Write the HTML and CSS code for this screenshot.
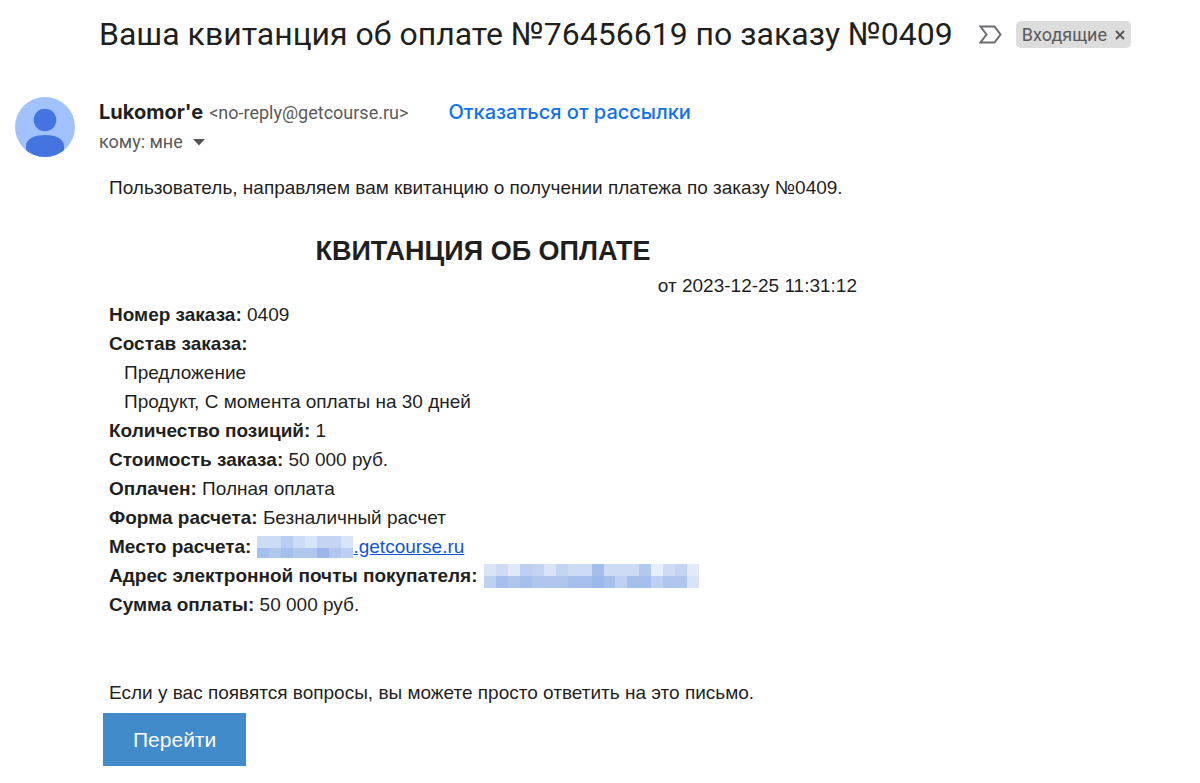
FILE: index.html
```
<!DOCTYPE html>
<html lang="ru">
<head>
<meta charset="utf-8">
<title>Ваша квитанция об оплате</title>
<link rel="stylesheet" href="styles.css">
</head>
<body>
<header class="subject">
  <h1 class="subject-title">Ваша квитанция об оплате №76456619 по заказу №0409</h1>
  <svg class="marker" width="24" height="20" viewBox="0 0 24 20" aria-hidden="true"><path d="M1.500 2.500H15.500L21.500 10.500L15.500 18.500H1.500L7.500 10.500Z" fill="none" stroke="#6b6d70" stroke-width="2"/></svg>
  <span class="label">Входящие
    <button class="label-close" type="button" aria-label="Удалить ярлык"><svg width="10" height="12" viewBox="0 0 10 12"><path d="M1 3L9 11M9 3L1 11" stroke="#555" stroke-width="1.800"/></svg></button>
  </span>
</header>
<main class="message">
  <svg class="avatar" width="60" height="60" viewBox="0 0 60 60" aria-hidden="true">
    <defs><clipPath id="round"><circle cx="30" cy="30" r="30"/></clipPath></defs>
    <circle cx="30" cy="30" r="30" fill="#a1c2fd"/>
    <g clip-path="url(#round)" fill="#4374e0"><circle cx="30" cy="23" r="11.300"/><path d="M11 60V49C11 41 21 38 30 38S49 41 49 49V60Z"/></g>
  </svg>
  <div class="content">
    <div class="sender">
      <span class="sender-name">Lukomor'e</span>
      <span class="sender-mail">&lt;no-reply@getcourse.ru&gt;</span>
      <a class="unsubscribe" href="#">Отказаться от рассылки</a>
    </div>
    <button class="recipient" type="button">кому: мне <svg width="12" height="7" viewBox="0 0 12 7" aria-hidden="true"><path d="M0 0H12L6 6.500Z" fill="#555"/></svg></button>
    <article class="letter">
      <p>Пользователь, направляем вам квитанцию о получении платежа по заказу №0409.</p>
      <h2 class="receipt-title">КВИТАНЦИЯ ОБ ОПЛАТЕ</h2>
      <p class="receipt-date">от 2023-12-25 11:31:12</p>
      <p><b>Номер заказа:</b> 0409</p>
      <p><b>Состав заказа:</b></p>
      <p class="item">Предложение</p>
      <p class="item">Продукт, С момента оплаты на 30 дней</p>
      <p><b>Количество позиций:</b> 1</p>
      <p><b>Стоимость заказа:</b> 50 000 руб.</p>
      <p><b>Оплачен:</b> Полная оплата</p>
      <p><b>Форма расчета:</b> Безналичный расчет</p>
      <p class="row"><b>Место расчета:</b>
        <span class="masked-link"><svg width="96" height="22" viewBox="0 0 96 22" aria-hidden="true" shape-rendering="crispEdges">
          <path fill="#cddcf5" d="M0 0h96v12H0z"/><path fill="#b8cef1" d="M24 0h12v12H24z"/><path fill="#c4d4f2" d="M60 0h24v12H60z"/><path fill="#d8e4f8" d="M48 0h12v12H48zM84 0h12v12H84z"/>
          <path fill="#b0c7ee" d="M0 12h96v10H0z"/><path fill="#a4beed" d="M0 12h12v10H0zM24 12h12v10H24z"/><path fill="#9bb7ea" d="M60 12h12v10H60z"/><path fill="#bbcff2" d="M84 12h12v10H84z"/>
        </svg><a class="site" href="#">.getcourse.ru</a></span></p>
      <p class="row"><b>Адрес электронной почты покупателя:</b>
        <svg width="215" height="24" viewBox="0 0 215 24" aria-hidden="true" shape-rendering="crispEdges">
          <path fill="#cddbf5" d="M0 0h215v12H0z"/><path fill="#d9e4f7" d="M0 0h12v12H0zM60 0h12v12H60z"/><path fill="#e0e8f9" d="M24 0h12v12H24z"/><path fill="#bdd0f1" d="M36 0h12v12H36z"/><path fill="#c3d4f2" d="M48 0h12v12H48zM72 0h12v12H72zM191 0h12v12H191z"/><path fill="#a6beeb" d="M108 0h12v12H108z"/><path fill="#b2c8ee" d="M155 0h12v12H155z"/><path fill="#e8eefb" d="M167 0h12v12H167z"/><path fill="#e2eaf8" d="M203 0h12v12H203z"/>
          <path fill="#b1c6ee" d="M0 12h215v12H0z"/><path fill="#bfd1f2" d="M0 12h12v12H0zM131 12h12v12H131zM167 12h12v12H167z"/><path fill="#a7bfec" d="M12 12h12v12H12zM36 12h12v12H36zM84 12h47v12H84zM143 12h24v12H143z"/><path fill="#9db8ea" d="M108 12h12v12H108z"/><path fill="#d8e3f6" d="M203 12h12v12H203z"/>
        </svg></p>
      <p><b>Сумма оплаты:</b> 50 000 руб.</p>
      <p class="outro">Если у вас появятся вопросы, вы можете просто ответить на это письмо.</p>
    </article>
    <a class="go" href="#">Перейти</a>
  </div>
</main>
</body>
</html>
```
FILE: styles.css
```
* { box-sizing: border-box; }
body { margin: 0; background: #fff; color: #1f1f1f; font-family: "Liberation Sans", Arial, sans-serif; font-size: 19px; line-height: 29px; }
h1, h2, p { margin: 0; }
button { border: 0; padding: 0; background: none; font: inherit; color: inherit; cursor: pointer; }
.subject { display: flex; align-items: center; padding: 12px 16px 0 99px; font-family: Roboto, sans-serif; }
.subject-title { font-family: Roboto, sans-serif; font-size: 32px; line-height: 44px; font-weight: 400; white-space: nowrap; }
.marker { flex: none; margin-left: 26px; }
.label { display: flex; align-items: center; gap: 8px; margin-left: 13px; padding: 0 6px; height: 27px; border-radius: 5px; background: #ddd; color: #5a5a5a; font-size: 18px; white-space: nowrap; }
.label-close { display: flex; }
.message { display: flex; gap: 24px; padding: 41px 15px 17px; }
.avatar { flex: none; }
.content { flex: 1; min-width: 0; }
.sender { display: flex; align-items: baseline; height: 30px; font-family: Roboto, sans-serif; line-height: 30px; white-space: nowrap; }
.sender-name { font-family: Inter, sans-serif; font-size: 20px; font-weight: 700; }
.sender-mail { margin-left: 6px; font-size: 18px; color: #5a5a5a; }
.unsubscribe { margin-left: 40px; font-family: Inter, sans-serif; font-size: 20px; font-weight: 500; color: #0f70f0; text-decoration: none; }
.recipient { display: flex; align-items: center; gap: 10px; font-family: Roboto, sans-serif; font-size: 18px; line-height: 30px; color: #5a5a5a; }
.letter { max-width: 768px; padding: 16px 10px 6px; }
.receipt-title { margin-top: 29px; font-size: 27px; line-height: 40px; text-align: center; }
.receipt-date { text-align: right; }
.item { padding-left: 15px; }
.row { display: flex; align-items: center; gap: 6px; height: 29px; white-space: nowrap; }
.masked-link { display: flex; align-items: center; }
.site { color: #0f55d4; text-decoration: underline; }
.outro { margin-top: 59px; }
.go { display: block; width: fit-content; margin-left: 4px; padding: 12px 30px; background: #428bca; color: #fff; font-size: 21px; text-decoration: none; }
```
